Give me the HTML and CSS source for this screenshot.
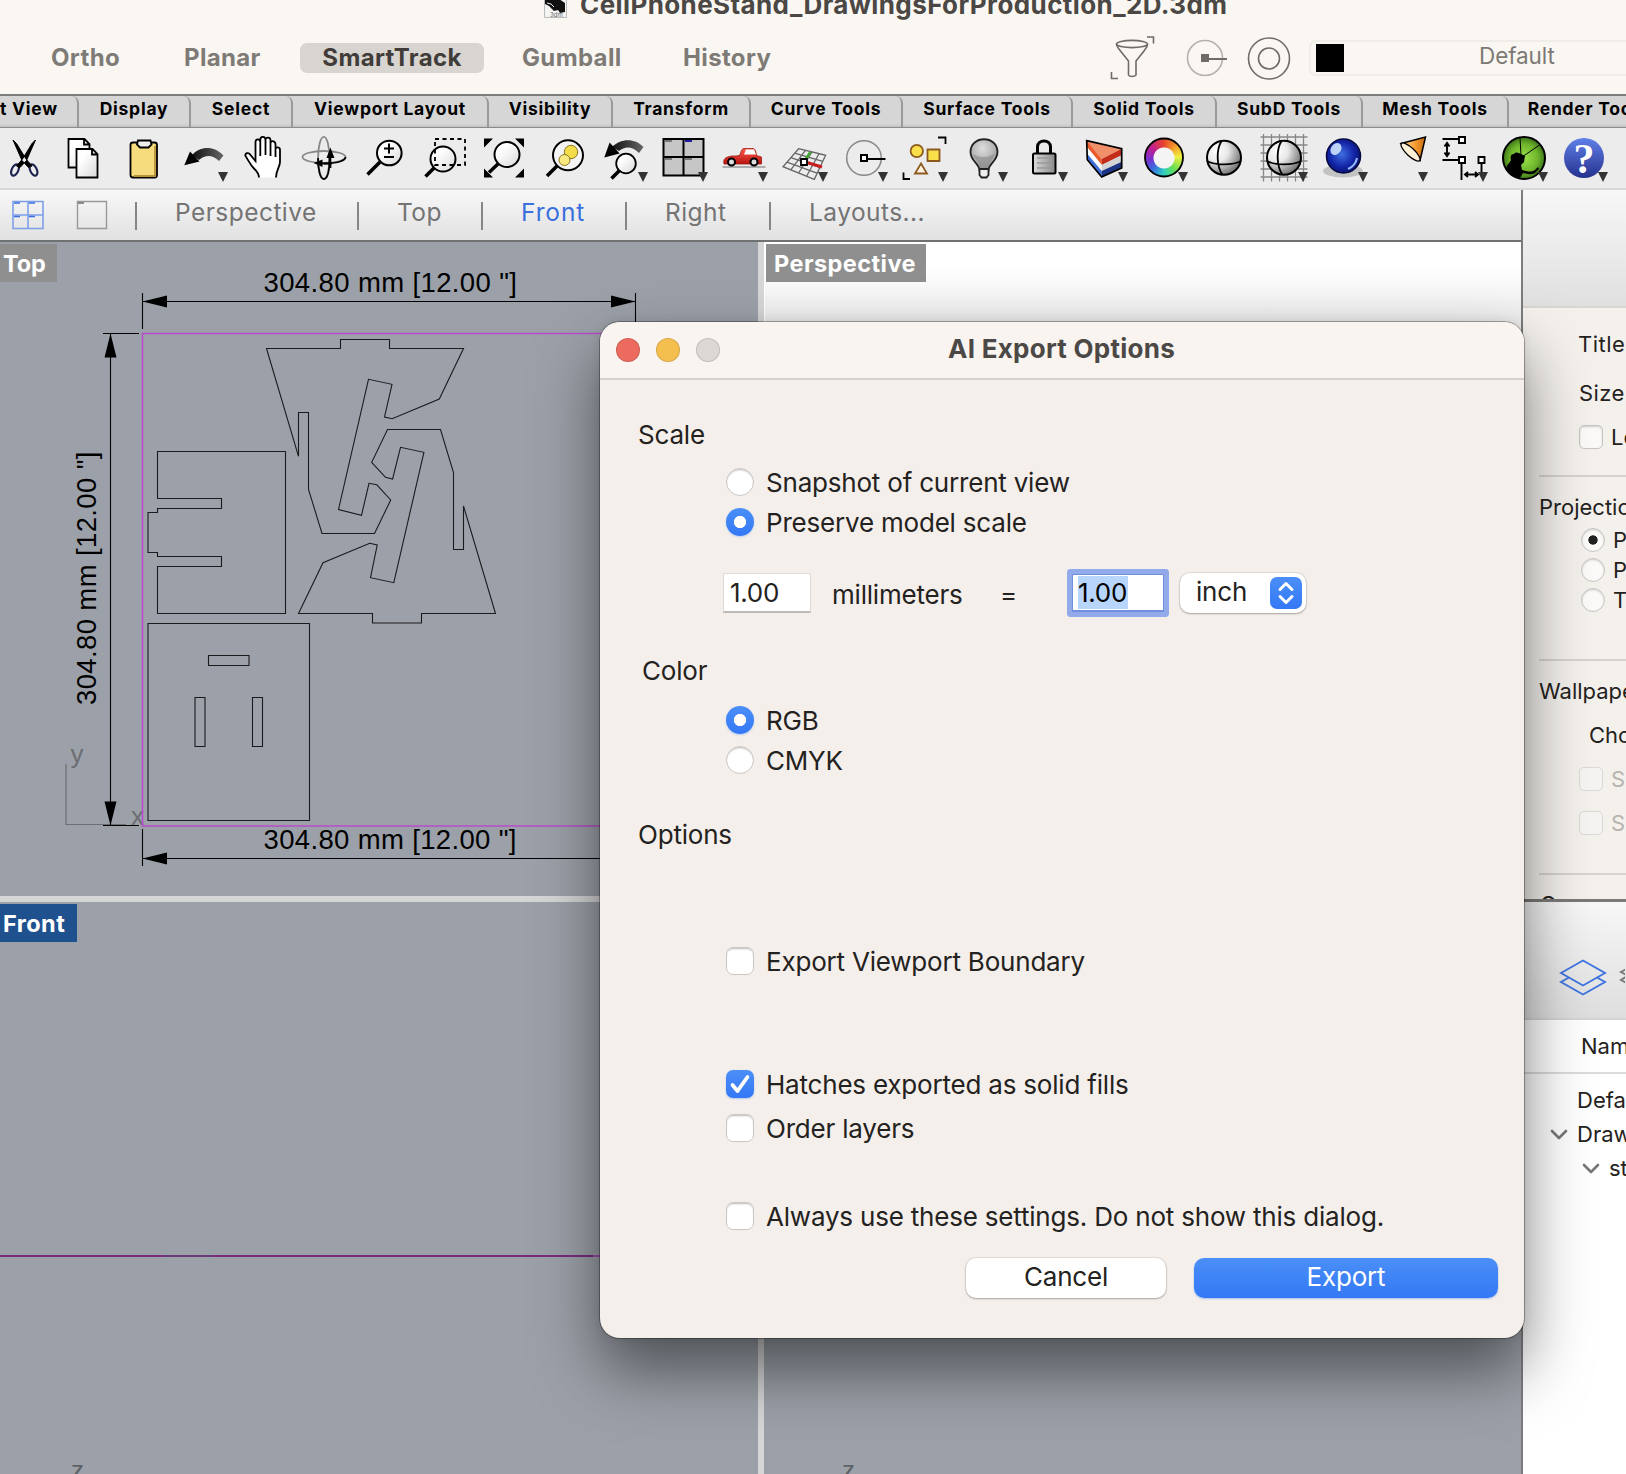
FILE: index.html
```html
<!DOCTYPE html>
<html lang="en">
<head>
<meta charset="utf-8">
<title>CellPhoneStand_DrawingsForProduction_2D.3dm</title>
<link rel="stylesheet" href="styles.css">
</head>
<body>
<svg width="0" height="0" class="defs">
  <defs>
    <symbol id="drop" viewBox="0 0 10 10"><path d="M0 0h10L5 10z" fill="#333"/></symbol>
    <linearGradient id="gArc"><stop offset="0" stop-color="#111"/><stop offset="1" stop-color="#666"/></linearGradient>
    <linearGradient id="gPage" x1="0" y1="0" x2="1" y2="1"><stop offset="0.3" stop-color="#fff"/><stop offset="1" stop-color="#d8d8d8"/></linearGradient>
    <linearGradient id="gLock"><stop offset="0" stop-color="#ddd"/><stop offset="1" stop-color="#888"/></linearGradient>
    <linearGradient id="gCar" x1="0" y1="0" x2="0" y2="1"><stop offset="0" stop-color="#ff5a4a"/><stop offset="1" stop-color="#b81410"/></linearGradient>
    <linearGradient id="gHelp" x1="0" y1="0" x2="0" y2="1"><stop offset="0" stop-color="#5f7fe8"/><stop offset="1" stop-color="#26328e"/></linearGradient>
    <linearGradient id="gCone" x1="0" y1="0" x2="1" y2="0"><stop offset="0" stop-color="#ffe0a0"/><stop offset="0.6" stop-color="#f59a2e"/><stop offset="1" stop-color="#c86a10"/></linearGradient>
    <radialGradient id="gBall" cx="0.3" cy="0.3" r="0.8"><stop offset="0" stop-color="#fff"/><stop offset="0.4" stop-color="#e8e8e8"/><stop offset="1" stop-color="#666"/></radialGradient>
    <radialGradient id="gBlue" cx="0.45" cy="0.45" r="0.6"><stop offset="0" stop-color="#3f6fe0"/><stop offset="0.6" stop-color="#1325a8"/><stop offset="1" stop-color="#080f66"/></radialGradient>
    <radialGradient id="gGreen" cx="0.5" cy="0.5" r="0.55"><stop offset="0" stop-color="#9be04a"/><stop offset="0.6" stop-color="#6fb52c"/><stop offset="1" stop-color="#2e6412"/></radialGradient>
    <radialGradient id="gBulb" cx="0.45" cy="0.3" r="0.7"><stop offset="0" stop-color="#ddd"/><stop offset="1" stop-color="#999"/></radialGradient>
  </defs>
</svg>
<div class="app">
  <header class="header">
    <div class="doc-title">
      <svg width="23" height="27" viewBox="0 0 23 27"><path d="M.5 0h22v26.500H.5z" fill="#f4f4f4" stroke="#bbb"/><path d="M1 6l6 2 5-2 9 6v9l-5 1-2-3-4 1-5-5-4-2z" fill="#111"/><path d="M3 12l4 1 3 3" stroke="#eee" fill="none"/><text x="6" y="25.500" class="ext">3dm</text></svg>
      <span>CellPhoneStand_DrawingsForProduction_2D.3dm</span>
    </div>
    <div class="modes">
      <span class="mode m1">Ortho</span><span class="mode m2">Planar</span><span class="mode m3 on">SmartTrack</span><span class="mode m4">Gumball</span><span class="mode m5">History</span>
      <svg class="mode-icons" width="190" height="48" viewBox="0 0 190 48" fill="none" stroke="#6f6c68" stroke-width="1.600">
        <path d="M38 3h6.500v6.500M2.500 38v6.500H9"/><ellipse cx="23" cy="10" rx="15.500" ry="3.600"/><path d="M7.500 10c0 3 2 4 4 7l8 10v14c1 2 6 2 7.500 0V27l8-10c2-3 3.500-4 3.500-7"/>
        <circle cx="96" cy="24" r="17.500" stroke="#b5b2ae"/><path d="M92 20h8v8h-8z" fill="#6f6c68" stroke="none"/><path d="M99 25h19" stroke-width="2"/>
        <circle cx="160" cy="24.500" r="20.500"/><circle cx="160" cy="24.500" r="10.500"/>
      </svg>
      <div class="layer-box"><i></i><span>Default</span></div>
    </div>
  </header>

  <nav class="tabs">
    <span class="tab w1">t View</span><span class="tab w2">Display</span><span class="tab w3">Select</span><span class="tab w4">Viewport Layout</span><span class="tab w5">Visibility</span><span class="tab w6">Transform</span><span class="tab w7">Curve Tools</span><span class="tab w8">Surface Tools</span><span class="tab w9">Solid Tools</span><span class="tab w10">SubD Tools</span><span class="tab w11">Mesh Tools</span><span class="tab w12">Render Tools</span>
  </nav>

  <div class="icons">
    <svg viewBox="0 0 60 61"><g fill="none" stroke="#1d2550" stroke-width="2.200"><ellipse cx="21" cy="42" rx="3.300" ry="6" transform="rotate(25 21 42)"/><ellipse cx="39.500" cy="42" rx="3.300" ry="6" transform="rotate(-25 39.500 42)"/></g><path d="M19 12l3.500 3.500L32 31l6 7-3.500 1.500-6.500-7zM41.500 12L38 15.500 28.500 31l-6 7 3.500 1.500 6.500-7z" fill="#000" stroke="#000"/></svg>
    <svg viewBox="0 0 60 61" fill="url(#gPage)" stroke="#000" stroke-width="1.800"><path d="M14.500 11h16l5 5v23.500h-21zM30 11v5.500h5.500"/><path d="M22.500 21h16l5 5v23.500h-21zM38 21v5.500h5.500"/></svg>
    <svg viewBox="0 0 60 61" stroke="#000" stroke-width="1.800"><rect x="16.500" y="14.500" width="26.500" height="35" rx="2.500" fill="#f6dc7d"/><path d="M41 18v30H20" stroke="#b8923a" fill="none"/><path d="M24 12.500h12.500l1 4-3 3h-8.500l-3-3z" fill="#eee"/></svg>
    <svg viewBox="0 0 60 61"><path d="M18 27C26 18 40 17 49.500 27.500L45 33c-7-7-14-6-20-1z" fill="url(#gArc)"/><path d="M10.300 37.300L16 23.500l9.500 10z"/><use href="#drop" x="44" y="44" width="10" height="10"/></svg>
    <svg viewBox="0 0 60 61"><path d="M25 49.500c0-4-2-6-5-9-4-4-6-9-8.500-12.500-1-3 3-4 5-1l5 6V14c0-3.500 4.500-3.500 4.800 0v-2c0-4 5-4.300 5.200 0 .3-3.500 5-3 5 .5v2.500c1-3 5-2 5 1.500V21c.5-2.500 4.500-2 4.500 1v12c0 5-4 8-4 15.500z" fill="#fff"/><path d="M25 49.500c0-4-2-6-5-9-4-4-6-9-8.500-12.500-1-3 3-4 5-1l5 6V14c0-3.500 4.500-3.500 4.800 0v14V12c0-4 5-4.300 5.200 0v15V12c.3-3.500 5-3 5 .5V28V15c1-3 5-2 5 1.500V29v-8c.5-2.500 4.500-2 4.500 1v12c0 5-4 8-4 15.500" fill="none" stroke="#000" stroke-width="1.800"/></svg>
    <svg viewBox="0 0 60 61" fill="none" stroke-width="1.800"><ellipse cx="29.800" cy="29.800" rx="5.700" ry="21" stroke="#888"/><ellipse cx="30" cy="29" rx="21.500" ry="6" stroke="#888"/><path d="M24 30c0 11 2 21 5.800 21s5.700-8 5.700-21" stroke="#000"/><path d="M51.500 29c0 4-9 6.500-21.500 6.500" stroke="#000"/><path d="M26 35.500h12M36.400 40V28" stroke="#000"/><path d="M19.500 35l9-3.500v7.500zM36.400 19.500L32.500 30h8z" fill="#000"/></svg>
    <svg viewBox="0 0 60 61"><path d="M26 34L13.500 46.500" stroke="#000" stroke-width="3.500"/><circle cx="35.300" cy="25" r="12.300" fill="url(#gPage)" stroke="#000" stroke-width="2"/><path d="M30 20.500h10M35 15.500v10M30 29h10" stroke="#000" stroke-width="2"/></svg>
    <svg viewBox="0 0 60 61"><path d="M20 40l-8.500 8.500" stroke="#000" stroke-width="3.500"/><circle cx="29" cy="31" r="12.500" fill="url(#gPage)" stroke="#000" stroke-width="2"/><path d="M21 11h30v26H21z" fill="none" stroke="#000" stroke-width="1.800" stroke-dasharray="4 3.500"/></svg>
    <svg viewBox="0 0 60 61"><path d="M10 10.500h9l-9 9zM50 10.500v9l-9-9zM10 49.500v-9l9 9zM50 49.500h-9l9-9z"/><path d="M25 35l-10 9.500" stroke="#000" stroke-width="3.500"/><circle cx="33" cy="26.500" r="12.500" fill="url(#gPage)" stroke="#000" stroke-width="2"/></svg>
    <svg viewBox="0 0 60 61"><path d="M24 37L13 48" stroke="#000" stroke-width="3.500"/><circle cx="34" cy="27.300" r="15" fill="#f4f4f4" stroke="#000" stroke-width="2"/><circle cx="37" cy="24" r="6.700" fill="#f3dc4a" stroke="#8a7620"/><circle cx="30.500" cy="32" r="5.500" fill="#f8ea80" stroke="#8a7620"/></svg>
    <svg viewBox="0 0 60 61"><path d="M18 19C26 11 40 9 49.500 19L45 25c-7-7-14-7-20-2z" fill="url(#gArc)"/><path d="M10.300 29.500L15.600 14.500l10 11z"/><path d="M26 42l-8.500 8.500" stroke="#000" stroke-width="3.500"/><circle cx="32" cy="35.500" r="9.800" fill="url(#gPage)" stroke="#000" stroke-width="1.800"/><use href="#drop" x="44" y="44" width="10" height="10"/></svg>
    <svg viewBox="0 0 60 61"><path d="M9.500 11h40v36.500h-40z" fill="#c6c6c6" stroke="#000" stroke-width="2"/><path d="M29.500 11v36.500M9.500 29h40" stroke="#000" stroke-width="2"/><path d="M11 13h7M11 31h7M31 31h7" stroke="#777" stroke-width="2"/><path d="M31 13h7" stroke="#1c1c9c" stroke-width="2"/><use href="#drop" x="44" y="44" width="10" height="10"/></svg>
    <svg viewBox="0 0 60 61"><path d="M8.500 39h43" stroke="#999" stroke-width="1.500"/><path d="M10 36c-1-5 1-7 8-8 4 0 6 0 8-1 1-4 2-6.500 4-6.500h9c2 0 3 3 3.500 7l5 1.500v7z" fill="url(#gCar)" stroke="#a01812" stroke-width=".8"/><path d="M30 26.500l2-5h8l2 5z" fill="#fff"/><g stroke="#000" stroke-width="2" fill="#ddd"><circle cx="17.500" cy="34" r="3.500"/><circle cx="40" cy="34" r="3.500"/></g><use href="#drop" x="44" y="44" width="10" height="10"/></svg>
    <svg viewBox="0 0 60 61"><path d="M24.600 20.700l27 6.600L40.300 51.300 9 38.700zM31.400 22.400L16.800 41.800M38 24L24.600 45M45 25.700L32.500 48.200M20.700 25.200l28 8.100M16.800 29.700l29 9.600M13 34.200l30 11" fill="none" stroke="#666" stroke-width="1.300"/><path d="M31 32l5.500-8" stroke="#3faa2f" stroke-width="2.500"/><path d="M33 34.500l15 4.500" stroke="#c82020" stroke-width="3"/><path d="M27 31h6v6h-6z" fill="#fff" stroke="#000" stroke-width="1.800"/><use href="#drop" x="44" y="44" width="10" height="10"/></svg>
    <svg viewBox="0 0 60 61"><circle cx="30" cy="30" r="17.300" fill="none" stroke="#888" stroke-width="1.500"/><path d="M33 31h18.500" stroke="#000" stroke-width="2"/><path d="M27 27h6v6h-6z" fill="#fff" stroke="#000" stroke-width="2"/><use href="#drop" x="44" y="44" width="10" height="10"/></svg>
    <svg viewBox="0 0 60 61" stroke="#8c5a1e" stroke-width="1.800"><circle cx="22.800" cy="23" r="6.200" fill="#f9e04a"/><path d="M33.500 21.500h12v11.500h-12z" fill="#f9e04a"/><path d="M27 35.500l6 10H21z" fill="#fff1e0"/><path d="M44 9.500h7.500v6.500M9.500 44.500v6.500H16" fill="none" stroke="#000"/><use href="#drop" x="44" y="44" width="10" height="10" stroke="none"/></svg>
    <svg viewBox="0 0 60 61"><path d="M25.500 42c0-6-9-9-9-18 0-17 27-17 27 0 0 9-9 12-9 18z" fill="url(#gBulb)" stroke="#222" stroke-width="1.800"/><path d="M19 26c6 4 16 4 22-1-2 7-6 9-7 15h-8c-1-6-6-9-7-14z" fill="#888" opacity=".6"/><path d="M25.500 41h9v6l-2 2.500h-5l-2-2.500z" fill="#eee" stroke="#222" stroke-width="1.800"/><use href="#drop" x="44" y="44" width="10" height="10"/></svg>
    <svg viewBox="0 0 60 61"><path d="M23.500 26v-7c0-8 13-8 13 0v7" fill="none" stroke="#000" stroke-width="3"/><rect x="19" y="25.500" width="22.500" height="20" rx="1.500" fill="url(#gLock)" stroke="#000" stroke-width="2"/><path d="M23 30h14M23 35h14M23 40h14" stroke="#999" stroke-width="1.500"/><use href="#drop" x="44" y="44" width="10" height="10"/></svg>
    <svg viewBox="0 0 60 61"><path d="M12.700 12.700l35 8L27.700 31z" fill="#f0906a"/><path d="M12.700 12.700l15 18.300v6L13 19z" fill="#ea5a2c"/><path d="M27.700 31l20-10.300v6.500l-20 9.800z" fill="#c42c1a"/><path d="M13 19l14.700 18v6L13 25.500z" fill="#fff"/><path d="M27.700 37l20-9.800v6.500l-20 9.300z" fill="#d4d4d4"/><path d="M13 25.500L27.700 43v6L13.300 31.700z" fill="#3f6fd8"/><path d="M27.700 43l20-9.300V40l-20 9z" fill="#1c3484"/><path d="M12.700 12.700l35 8V40l-20 9-14.400-17.300z" fill="none" stroke="#000" stroke-width="1.700"/><use href="#drop" x="44" y="44" width="10" height="10"/></svg>
    <div class="wheel"><i></i><svg viewBox="0 0 60 61"><circle cx="30" cy="29.500" r="19" fill="none" stroke="#000" stroke-width="1.800"/><use href="#drop" x="44" y="44" width="10" height="10"/></svg></div>
    <svg viewBox="0 0 60 61"><circle cx="30" cy="29.700" r="17" fill="url(#gBall)" stroke="#000" stroke-width="2"/><path d="M13 33c8 4.500 26 4.500 34 0M27.500 13c-5.500 9-5 25 1 34" fill="none" stroke="#000" stroke-width="1.800"/></svg>
    <svg viewBox="0 0 60 61"><path d="M6.500 9h47M6.500 17h47M6.500 25h47M6.500 33h47M6.500 41h47M6.500 49h47M9.500 6v47.500M17.500 6v47.500M25.500 6v47.500M33.500 6v47.500M41.500 6v47.500M49.500 6v47.500" stroke="#888" stroke-width="1.300"/><circle cx="30" cy="29.700" r="17" fill="url(#gBall)" stroke="#000" stroke-width="2"/><path d="M13 33c8 4.500 26 4.500 34 0M27.500 13c-5.500 9-5 25 1 34" fill="none" stroke="#000" stroke-width="1.800"/><use href="#drop" x="44" y="44" width="10" height="10"/></svg>
    <svg viewBox="0 0 60 61"><ellipse cx="29" cy="43" rx="20" ry="6.500" fill="#999" opacity=".5"/><circle cx="29.500" cy="28" r="17" fill="url(#gBlue)" stroke="#060a40" stroke-width="1.500"/><ellipse cx="22" cy="21" rx="5" ry="6.500" fill="#cfe2ff" opacity=".9" transform="rotate(35 22 21)"/><path d="M34 41c5-2 8-6 9-11" stroke="#8fb8ff" stroke-width="2" fill="none"/><use href="#drop" x="44" y="44" width="10" height="10"/></svg>
    <svg viewBox="0 0 60 61"><path d="M27 15.500L51.500 9l-5.500 23.500z" fill="url(#gCone)" stroke="#000" stroke-width="1.500"/><ellipse cx="36.500" cy="24" rx="4" ry="12.500" transform="rotate(-47 36.500 24)" fill="#fff0d8" stroke="#000" stroke-width="1.300"/><use href="#drop" x="44" y="44" width="10" height="10"/></svg>
    <svg viewBox="0 0 60 61" fill="none" stroke="#000" stroke-width="1.900"><path d="M8.500 11H25M8.500 32H25M27.500 35v17M47.500 35v10M13 16v11M10.500 18.500L13 15l2.500 3.500M10.500 24.500L13 28l2.500-3.500M31 46.500h13M34 44l-3 2.500 3 2.500M41 44l3 2.500-3 2.500"/><path d="M25 9h6v6h-6zM25 29h6v6h-6zM44.500 29h6v6h-6z" fill="#fff"/><use href="#drop" x="44" y="44" width="10" height="10" stroke="none"/></svg>
    <svg viewBox="0 0 60 61"><circle cx="30" cy="30" r="21" fill="url(#gGreen)" stroke="#000" stroke-width="2"/><path d="M26 9.500l1 18M45.500 17L28 29" stroke="#000" fill="none"/><path d="M12 41c1-5 3-5 5-9-1-4 0-6 3-6 2-3 5-1 7 0l4 2-1 6-3 3 1 5c5 1 9 3 13 0l3-3 1 2-4 4c-4 2-9 1-12 0l-3 5c-7 0-12-4-14-9z"/><use href="#drop" x="44" y="44" width="10" height="10"/></svg>
    <svg viewBox="0 0 60 61"><circle cx="30" cy="30" r="20" fill="url(#gHelp)"/><text x="30" y="44.500" class="q">?</text><use href="#drop" x="44" y="44" width="10" height="10"/></svg>
  </div>

  <div class="main">
    <div class="left">
      <div class="views">
        <svg class="v-ico" width="98" height="30" viewBox="0 0 98 30" fill="none"><path d="M1 1.500h30v27H1zM16 1.500v27M1 15h30" stroke="#7d9fe8" stroke-width="1.600"/><path d="M2 3h6M17 3h6M2 16.500h6M17 16.500h6" stroke="#3a6fe0" stroke-width="1.600"/><path d="M65.500 1.500h29v27h-29z" stroke="#999" stroke-width="1.400"/><path d="M66 3h6" stroke="#777" stroke-width="1.600"/></svg>
        <span class="v a">Perspective</span><span class="v b">Top</span><span class="v c">Front</span><span class="v d">Right</span><span class="v e">Layouts...</span>
      </div>
      <div class="ports">
        <section class="port top">
          <svg width="758" height="654" viewBox="0 242 758 654" fill="none" stroke="#000" stroke-width="1">
            <path d="M66 764v60.500h60" stroke="#6b6e72" stroke-width="1.200"/>
            <text x="70.500" y="763" class="axis">y</text><text x="131" y="825" class="axis">x</text>
            <path d="M700 333.500H142.500V826H700" stroke="#b94ccc" stroke-width="1.600"/>
            <g stroke-width="1.100">
              <path d="M142.500 293v36M635.500 293v36M142.500 301.500h493M142.500 829v37M142.500 858.500H660M110.500 334v491M103 333.500h36M103 825.500h36"/>
              <path d="M142.500 301.500l24.500-6v12zM635.500 301.500l-24.500-6v12zM142.500 858.500l24.500-6v12zM110.500 333.500l-6 24h12zM110.500 825.500l-6-24h12z" fill="#000" stroke="none"/>
            </g>
            <g stroke="#1a1b1d" stroke-width="1.100">
              <path d="M266.500 348.500h74v-9h49v9H463.500L439.300 399l-47.100 19.700-7.700-1.700 7.500-32.700-23.500-5L338.500 509.500l23 5.800 7.500-32 7.800 1.500 13.900 15.200L374.500 533.500H322l-13.500-44.200V412.500h-10v43.800z"/>
              <path d="M298.500 613.500L323 562.700l46.700-19.400 7.500 1.700-6.700 32.700 23.300 5 30.100-130.400-23.400-5-7.900 31.700-7.100-1.700-13.800-15 15.800-32.800h53l13 43.200v76.800h10V506L495.500 613.500h-74v9.500h-49v-9.500z"/>
              <path d="M157.500 451.500h128v162h-128v-47h64v-10h-64v-4h-9.500v-40h9.500v-4h64v-10h-64z"/>
              <path d="M148 623.500h161.500v197H148zM208.500 655.500h40.500v10h-40.500zM195 697.500h10v49h-10zM252.500 697.500h10v49h-10z"/>
            </g>
            <g class="dim"><text x="263.500" y="291.500" textLength="253.500">304.80 mm [12.00 "]</text><text x="263.500" y="849" textLength="253">304.80 mm [12.00 "]</text><text transform="translate(95.500 705) rotate(-90)" textLength="253.500">304.80 mm [12.00 "]</text></g>
          </svg>
          <span class="tag t1">Top</span>
        </section>
        <section class="port persp"><span class="tag t2">Perspective</span></section>
        <section class="port front"><div class="cplane"></div><span class="tag t3">Front</span><span class="z">z</span></section>
        <section class="port right"><span class="z">z</span></section>
      </div>
    </div>
    <aside class="side">
      <div class="strip"></div>
      <div class="props">
        <p class="p1">Title:</p>
        <p class="p2">Size:</p>
        <p class="p3"><i class="cb"></i>Lock</p>
        <hr>
        <p class="p4">Projection</p>
        <p class="p5"><i class="rb dot"></i>Parallel</p>
        <p class="p5"><i class="rb"></i>Perspective</p>
        <p class="p5"><i class="rb"></i>Two-Point</p>
        <hr class="h2">
        <p class="p6">Wallpaper</p>
        <p class="p7">Choose</p>
        <p class="p8 dis"><i class="cb"></i>Show</p>
        <p class="p8 dis"><i class="cb"></i>Show</p>
        <hr class="h3">
        <p class="p9">C</p>
      </div>
      <div class="strip2">
        <svg width="66" height="38" viewBox="0 0 66 38" fill="none" stroke-width="1.900"><path d="M2 14L24 1.500 46 14 24 26.500zM10 18.500L2 23l22 12.500L46 23l-8-4.500" stroke="#3f74e0"/><path d="M80 3L62 13l18 10M68 17l-6 4 18 10" stroke="#777"/></svg>
      </div>
      <div class="layers">
        <p class="name">Name</p>
        <p class="l1">Default</p>
        <p class="l2"><svg width="18" height="11" viewBox="0 0 18 11"><path d="M2 2l7 7 7-7"/></svg>Drawings</p>
        <p class="l3"><svg width="18" height="11" viewBox="0 0 18 11"><path d="M2 2l7 7 7-7"/></svg>stand</p>
      </div>
    </aside>
  </div>

  <div class="dialog">
    <div class="bar"><i class="red"></i><i class="yel"></i><i class="gry"></i><b>AI Export Options</b></div>
    <div class="content">
      <div class="row head r1">Scale</div>
      <div class="row opt r2"><i class="radio"></i><span>Snapshot of current view</span></div>
      <div class="row opt"><i class="radio on"></i><span>Preserve model scale</span></div>
      <div class="row fields"><span class="inp">1.00</span><span class="mm">millimeters</span><span class="eq">=</span><span class="inp focus"><mark>1.00</mark></span><span class="sel"><span>inch</span><svg width="32" height="32" viewBox="0 0 32 32"><path d="M10 12.500l6-6 6 6M10 19.500l6 6 6-6"/></svg></span></div>
      <div class="row head r3">Color</div>
      <div class="row opt r4"><i class="radio on"></i><span>RGB</span></div>
      <div class="row opt"><i class="radio"></i><span>CMYK</span></div>
      <div class="row head r5">Options</div>
      <div class="row opt r6"><i class="check"></i><span>Export Viewport Boundary</span></div>
      <div class="row opt r7"><i class="check on"><svg width="28" height="28" viewBox="0 0 28 28"><path d="M6.500 15l5 6L21.500 7"/></svg></i><span>Hatches exported as solid fills</span></div>
      <div class="row opt r8"><i class="check"></i><span>Order layers</span></div>
      <div class="row opt r9"><i class="check"></i><span>Always use these settings. Do not show this dialog.</span></div>
      <div class="row btns"><span class="btn">Cancel</span><span class="btn pri">Export</span></div>
    </div>
  </div>
</div>
</body>
</html>
```
FILE: styles.css
```css
* { box-sizing: border-box; }
body { margin: 0; font-family: Inter, "Liberation Sans", sans-serif; color: #242220; }
p { margin: 0; }
i { font-style: normal; }
.defs { position: absolute; }
.app { position: relative; width: 1626px; height: 1474px; overflow: hidden; display: flex; flex-direction: column; white-space: nowrap; }

/* window header */
.header { height: 94px; flex: none; background: #faf7f2; overflow: hidden; }
.doc-title { display: flex; gap: 13px; height: 27px; margin-top: -9px; padding-left: 544px; align-items: center; font-weight: 700; font-size: 26px; line-height: 27px; color: #4a4744; letter-spacing: 0.4px; }
.ext { font: 6px Inter, sans-serif; fill: #666; letter-spacing: 0; }
.modes { display: flex; align-items: center; height: 48px; margin-top: 16px; }
.mode { flex: none; height: 30px; line-height: 30px; font-size: 24px; font-weight: 700; color: #7e7b77; letter-spacing: 0.35px; }
.m1 { width: 133px; margin-left: 51px; }
.m2 { width: 116px; }
.m3 { width: 184px; text-align: center; }
.m4 { width: 161px; margin-left: 38px; }
.m5 { width: 426px; }
.mode.on { background: #d8d4cf; border-radius: 7px; color: #3f3c39; }
.mode-icons { flex: none; }
.layer-box { flex: none; display: flex; align-items: center; width: 420px; height: 36px; margin-left: 10px; margin-top: -1px; padding-left: 5px; border: 2px solid #f0ece7; border-radius: 7px; color: #7c7975; font-size: 22.500px; letter-spacing: -0.1px; }
.layer-box i { width: 28px; height: 28px; background: #000; }
.layer-box span { margin: -4px 0 0 135px; }

/* toolbar tabs */
.tabs { flex: none; display: flex; height: 34px; background: #d6d6d6; border-top: 2px solid #7d7d7d; border-bottom: 1px solid #8c8c8c; }
.tab { flex: none; height: 31px; line-height: 25px; text-align: center; font-size: 17.500px; font-weight: 700; color: #000; border-right: 2px solid #9a9a9a; border-top-right-radius: 7px; box-shadow: inset 0 -3px 3px -2px #bbb; letter-spacing: 0.75px; }
.w1 { width: 79px; text-align: right; padding-right: 20px; direction: ltr; }
.w2 { width: 112px; } .w3 { width: 102px; } .w4 { width: 196px; } .w5 { width: 124px; } .w6 { width: 138px; }
.w7 { width: 152px; } .w8 { width: 170px; } .w9 { width: 144px; } .w10 { width: 146px; } .w11 { width: 146px; }
.w12 { width: 160px; }

/* tool icons */
.icons { flex: none; display: flex; height: 62px; padding-left: 0; background: #ececec; border-bottom: 2px solid #d9d8d5; }
.icons > * { flex: none; width: 60px; height: 61px; }
.icons > :first-child { margin-left: -6px; }
.wheel { display: grid; }
.wheel > * { grid-area: 1 / 1; }
.wheel i { width: 38px; height: 38px; margin: 10.500px 11px; border-radius: 50%; background: radial-gradient(circle, #f4f4f4 10px, transparent 11px), conic-gradient(#e8452a, #f5a02c 45deg, #f0f040 85deg, #6adf50 135deg, #30d0c0 180deg, #3a6fe0 225deg, #7a2fd0 265deg, #c02090 310deg, #e8452a); }
.q { font: 700 42px "Liberation Serif", serif; fill: #fff; text-anchor: middle; }

/* viewport tabs */
.main { flex: 1; display: flex; min-height: 0; }
.left { flex: none; width: 1523px; border-right: 2px solid #7c7c7e; display: flex; flex-direction: column; }
.views { flex: none; display: flex; align-items: center; height: 52px; background: linear-gradient(#f8f8f8, #e1e1e1); border-bottom: 2px solid #707173; font-size: 24.500px; letter-spacing: 0.45px; color: #747474; }
.v-ico { flex: none; margin: -1px 0 0 12px; }
.v { flex: none; height: 28px; line-height: 20px; margin-top: 1px; border-left: 2px solid #868686; }
.a { width: 222px; margin-left: 25px; padding-left: 38px; }
.b { width: 124px; padding-left: 38px; }
.c { width: 144px; padding-left: 38px; color: #3a70de; letter-spacing: 0.9px; }
.d { width: 144px; padding-left: 38px; }
.e { padding-left: 38px; }

/* viewports */
.ports { flex: 1; display: grid; grid-template: 654px 1fr / 758px 1fr; gap: 6px; background: #d6d6d6; min-height: 0; }
.port { background: #9ca1a9; overflow: hidden; display: grid; align-content: start; justify-items: start; }
.port > * { grid-area: 1 / 1; }
.persp { background: linear-gradient(#fff, #fff 25px, #ececec 80px, #ccc); border-left: 1px solid #fff; }
.tag { margin-top: 2px; height: 38px; line-height: 39px; font-size: 23.500px; font-weight: 700; color: #fff; background: #8f8f8f; padding-left: 3px; letter-spacing: 0.45px; }
.t1 { width: 57px; letter-spacing: -0.1px; }
.t2 { width: 160px; margin-left: 1px; padding-left: 8px; }
.t3 { width: 77px; background: #20518f; padding-left: 3px; }
.dim { font: 27.500px "Liberation Sans", Arial, sans-serif; fill: #000; stroke: none; }
.axis { font: 26px "Liberation Sans", Arial, sans-serif; fill: #6b6e72; stroke: none; }
.z { font: 26px/26px "Liberation Sans", Arial, sans-serif; color: #5e6165; margin: 555px 0 0 71px; }
.right .z { margin-left: 78px; }
.cplane { width: 758px; height: 2px; margin-top: 353px; background: linear-gradient(90deg, #7b2a80 0 163px, #6f3a78 163px 213px, #7b2a80 213px 593px, #a050a8 593px); }

/* side panel */
.side { flex: 1; min-width: 0; overflow: hidden; font-size: 22px; background: #fff; display: flex; flex-direction: column; }
.strip { flex: none; height: 118px; background: linear-gradient(#f7f7f7, #e0e0e0); border-bottom: 2px solid #d9d6d2; }
.props { flex: none; height: 594px; overflow: hidden; background: #f4f1ed; border-bottom: 3px solid #7c7a79; padding: 21px 0 0 16px; }
.props p { height: 30px; display: flex; align-items: center; }
.props hr { height: 2px; border: 0; margin: 23px 0 0; background: #d6d2cf; }
.p1 { padding-left: 39px; letter-spacing: 0.5px; }
.p2 { padding-left: 40px; margin-top: 19px; letter-spacing: 0.4px; }
.p3 { padding-left: 40px; margin-top: 14px; gap: 8px; }
.p4 { margin-top: 15px; }
.p4 + .p5 { margin-top: 3px; }
.p5 { padding-left: 42px; gap: 8px; }
.props .h2 { margin-top: 44px; }
.p6 { margin-top: 15px; }
.p7 { padding-left: 50px; margin-top: 14px; }
.p8 { padding-left: 40px; margin-top: 14px; gap: 8px; }
.props .h3 { margin-top: 35px; }
.p9 { padding-left: 1px; margin-top: 14px; }
.dis { color: #b7b3af; }
.cb, .rb { flex: none; width: 24px; height: 24px; background: #fbfaf9; border: 1px solid #c9c5c2; border-radius: 5px; box-shadow: inset 0 1px 2px #ccc; }
.rb { border-radius: 50%; }
.dis .cb { background: #f6f4f2; border-color: #dcd8d5; box-shadow: none; }
.dot { background: radial-gradient(circle, #222 4.300px, #fbfaf9 5px); }
.strip2 { flex: none; height: 118px; background: linear-gradient(#f7f7f7, #dedede); border-bottom: 2px solid #d4d4d4; padding: 57px 0 0 36px; }
.layers { flex: 1; }
.layers p { display: flex; align-items: center; height: 34px; }
.layers .name { height: 54px; padding: 0 0 0 58px; border-bottom: 2px solid #dcdcdc; }
.layers .l1 { padding-left: 54px; margin-top: 9px; }
.l2 { padding-left: 27px; gap: 9px; }
.l3 { padding-left: 59px; gap: 9px; }
.layers svg { flex: none; fill: none; stroke: #777; stroke-width: 2.600; stroke-linecap: round; stroke-linejoin: round; }

/* export dialog */
.dialog { position: absolute; left: 600px; top: 322px; width: 924px; height: 1016px; border-radius: 20px; background: #f4efeb; box-shadow: 0 0 0 1px rgba(0,0,0,.3), 0 32px 64px rgba(0,0,0,.5), 0 0 10px rgba(0,0,0,.1); }
.bar { display: flex; align-items: center; gap: 16px; height: 58px; padding: 0 0 0 16px; background: #f9f4f0; border-bottom: 2px solid #d5d0cc; border-radius: 20px 20px 0 0; }
.bar i { width: 24px; height: 24px; border-radius: 50%; border: 1px solid rgba(0,0,0,.12); }
.red { background: #ec6a5e; } .yel { background: #f4bf4f; } .gry { background: #dcd8d4; }
.bar b { margin: -3px 0 0 212px; font-size: 26px; color: #4b4846; letter-spacing: 0.27px; }
.content { padding: 34px 26px 0 38px; font-size: 26px; letter-spacing: -0.2px; }
.row { display: flex; align-items: center; height: 40px; }
.opt { padding-left: 88px; gap: 12px; }
.radio, .check { flex: none; width: 28px; height: 28px; border-radius: 50%; background: #fff; border: 1px solid #cbc7c4; box-shadow: inset 0 2px 2px -1px #bbb; }
.check { border-radius: 7px; }
.on.radio { border: 0; background: radial-gradient(circle, #fff 5.800px, transparent 6.500px), linear-gradient(#4a8ff7, #3478f6); box-shadow: 0 1px 2px rgba(52,120,246,.3); }
.on.check { border: 0; background: linear-gradient(#4a8ff7, #3478f6); box-shadow: 0 1px 2px rgba(52,120,246,.3); }
.check svg { display: block; fill: none; stroke: #fff; stroke-width: 3.800; stroke-linecap: round; stroke-linejoin: round; }
.r2 { margin-top: 8px; }
.fields { margin-top: 31px; padding-left: 85px; }
.inp { flex: none; width: 88px; height: 40px; line-height: 38px; padding-left: 6px; background: #fff; border: 1px solid #dedad7; border-bottom: 2px solid #bdb9b6; letter-spacing: -0.3px; }
.mm { margin: 3px 0 0 21px; width: 168px; }
.eq { margin-top: 3px; width: 72px; }
.focus { width: 92px; height: 38px; line-height: 36px; padding-left: 5px; border-color: #6f90dd; box-shadow: 0 0 0 5px #92aae9; border-radius: 1px; }
mark { display: inline-block; height: 33px; line-height: 34px; background: #b8d5fb; color: #000; width: 50px; }
.sel { flex: none; display: flex; justify-content: space-between; align-items: center; width: 126px; height: 40px; margin-left: 16px; padding: 0 4px 0 16px; background: #fff; border-radius: 10px; box-shadow: 0 0 1px 1px rgba(0,0,0,.08), 0 1px 2px rgba(0,0,0,.25); }
.sel span { margin-top: -4px; }
.sel svg { border-radius: 7px; background: linear-gradient(#4a8ff7, #3478f6); fill: none; stroke: #fff; stroke-width: 3; stroke-linecap: round; stroke-linejoin: round; }
.r3 { margin-top: 37px; padding-left: 4px; }
.r4 { margin-top: 10px; }
.r5 { margin-top: 34px; }
.r6 { margin-top: 87px; }
.r7 { margin-top: 83px; }
.r8 { margin-top: 4px; }
.r9 { margin-top: 48px; }
.btns { margin-top: 22px; justify-content: flex-end; gap: 28px; }
.btn { width: 200px; height: 40px; line-height: 38px; text-align: center; border-radius: 10px; background: #fff; box-shadow: 0 0 1px 1px rgba(0,0,0,.08), 0 1px 2px rgba(0,0,0,.25); }
.pri { width: 304px; color: #fff; background: linear-gradient(#4a8ff7, #3478f6); box-shadow: 0 1px 2px rgba(52,120,246,.4); }
```
